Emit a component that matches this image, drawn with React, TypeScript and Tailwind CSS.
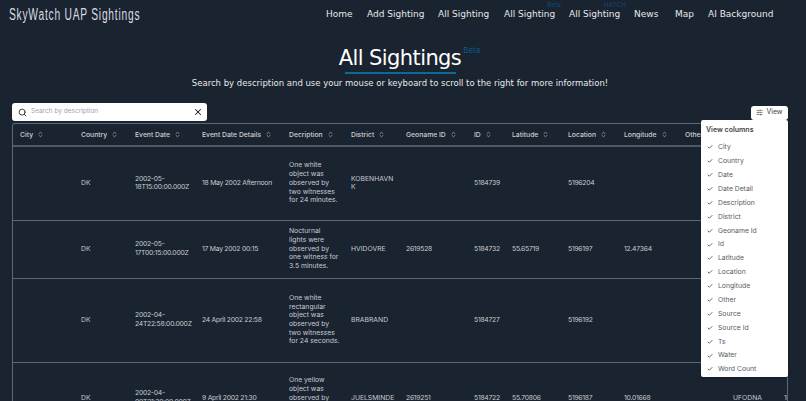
// <== IMPORTS ==>
import { Search, X, Check, ChevronsUpDown, SlidersHorizontal } from "lucide-react";

// <== NAV ITEMS ==>
const NAV_ITEMS = [
  { label: "Home", width: "w-[27px]" },
  { label: "Add Sighting", width: "w-[57px]" },
  { label: "All Sighting", width: "w-[52px]" },
  { label: "All Sighting", width: "w-[51px]", tag: "Beta" },
  { label: "All Sighting", width: "w-[51px]", tag: "HATCH" },
  { label: "News", width: "w-[27px]" },
  { label: "Map", width: "w-[19px]" },
  { label: "AI Background", width: "w-[67px]" },
];

// <== TABLE COLUMNS ==>
const COLUMNS = [
  { label: "City", width: "w-[60px]" },
  { label: "Country", width: "w-[54px]" },
  { label: "Event Date", width: "w-[67px]" },
  { label: "Event Date Details", width: "w-[87px]" },
  { label: "Decription", width: "w-[62px]" },
  { label: "District", width: "w-[55px]" },
  { label: "Geoname ID", width: "w-[68px]" },
  { label: "ID", width: "w-[38px]" },
  { label: "Latitude", width: "w-[56px]" },
  { label: "Location", width: "w-[56px]" },
  { label: "Longitude", width: "w-[61px]" },
  { label: "Other", width: "w-[48px]" },
  { label: "Source", width: "w-[51px]" },
  { label: "Source Id", width: "w-[60px]" },
];

// <== TABLE ROWS ==>
const ROWS = [
  {
    height: "h-[74px]",
    cells: ["", "DK", "2002-05-\n18T15:00:00.000Z", "18 May 2002 Afternoon", "One white\nobject was\nobserved by\ntwo witnesses\nfor 24 minutes.", "KOBENHAVN\nK", "", "5184739", "", "5196204", "", "", "", ""],
  },
  {
    height: "h-[58px]",
    cells: ["", "DK", "2002-05-\n17T00:15:00.000Z", "17 May 2002 00:15", "Nocturnal\nlights were\nobserved by\none witness for\n3.5 minutes.", "HVIDOVRE", "2619528", "5184732", "55.65719", "5196197", "12.47364", "", "", ""],
  },
  {
    height: "h-[84px]",
    cells: ["", "DK", "2002-04-\n24T22:58:00.000Z", "24 April 2002 22:58", "One white\nrectangular\nobject was\nobserved by\ntwo witnesses\nfor 24 seconds.", "BRABRAND", "", "5184727", "", "5196192", "", "", "", ""],
  },
  {
    height: "h-[72px]",
    cells: ["", "DK", "2002-04-\n09T21:30:00.000Z", "9 April 2002 21:30", "One yellow\nobject was\nobserved by\none witness\nfor 3 minutes.", "JUELSMINDE", "2619251", "5184722", "55.70806", "5196187", "10.01668", "", "UFODNA", "18"],
  },
];

// <== VISIBLE COLUMN OPTIONS ==>
const VIEW_OPTIONS = [
  "City",
  "Country",
  "Date",
  "Date Detail",
  "Description",
  "District",
  "Geoname Id",
  "Id",
  "Latitude",
  "Location",
  "Longitude",
  "Other",
  "Source",
  "Source Id",
  "Ts",
  "Water",
  "Word Count",
];

// <== HEADER ==>
const Header = () => (
  <div className="flex h-[28px] items-center justify-between pl-[9px] pr-[31px] pt-px">
    <span className="origin-left scale-x-[0.64] whitespace-nowrap font-['Liberation_Sans'] text-[16px] tracking-[1.2px] text-[#d8dce0]">
      SkyWatch UAP Sightings
    </span>
    <nav className="flex gap-[14px] font-['DejaVu_Sans'] text-[9px] text-[#e6e8eb]">
      {NAV_ITEMS.map((item, i) => (
        <span key={i} className={`relative whitespace-nowrap ${item.width}`}>
          {item.label}
          {item.tag && (
            <span className="absolute right-[-6px] top-[-7px] font-['Inter'] text-[6.5px] text-[#0e4a78]">
              {item.tag}
            </span>
          )}
        </span>
      ))}
    </nav>
  </div>
);

// <== TITLE BLOCK ==>
const TitleBlock = () => (
  <div className="flex flex-col items-center pr-[6px] pt-[16px]">
    <div className="relative">
      <h1 className="whitespace-nowrap font-['DejaVu_Sans'] text-[21px] leading-[28px] tracking-[-0.6px] text-white">
        All Sightings
      </h1>
      <span className="absolute left-[calc(100%+2px)] top-[0px] font-['Inter'] text-[8px] text-[#0e5a8a]">
        Beta
      </span>
      <div className="mx-auto h-[2px] w-[111px] bg-[#0c6a96]" />
    </div>
    <p className="mt-[2px] whitespace-nowrap font-['DejaVu_Sans'] text-[8.5px] leading-[14px] text-[#e6e8eb]">
      Search by description and use your mouse or keyboard to scroll to the right for more information!
    </p>
  </div>
);

// <== TOOLBAR ==>
const Toolbar = () => (
  <div className="mt-[13px] flex items-center justify-between pl-[12px] pr-[18px]">
    <div className="flex h-[18px] w-[195px] items-center rounded-[3px] bg-white pl-[6px] pr-[4px]">
      <Search className="size-[9px] text-[#333]" strokeWidth={2.5} />
      <span className="ml-[4px] flex-1 font-['Inter'] text-[6.5px] text-[#a0a4aa]">
        Search by description
      </span>
      <X className="size-[10px] text-[#222]" strokeWidth={2.5} />
    </div>
    <div className="mt-[1px] flex h-[14px] w-[37px] items-center justify-center gap-[3px] rounded-[3px] bg-white font-['Inter'] text-[7px] text-[#444]">
      <SlidersHorizontal className="size-[7px]" />
      View
    </div>
  </div>
);

// <== SIGHTINGS TABLE ==>
const SightingsTable = () => (
  <div className="ml-[12px] mr-[18px] mt-[2px] overflow-hidden rounded-t-[3px] border border-b-0 border-[#5b6875]">
    <table className="w-[823px] table-fixed border-collapse font-['Inter'] text-[6.8px] leading-[8.7px] text-[#c6cbd1]">
      <thead>
        <tr className="h-[22px] border-b-[2px] border-[#4d5967]">
          {COLUMNS.map((col) => (
            <th key={col.label} className={`${col.width} px-[8px] pt-px text-left font-medium text-[#ccd0d5] first:pl-[7px]`}>
              <span className="flex items-center gap-[4px] whitespace-nowrap">
                {col.label}
                <ChevronsUpDown className="size-[7px] shrink-0" />
              </span>
            </th>
          ))}
        </tr>
      </thead>
      <tbody>
        {ROWS.map((row, r) => (
          <tr key={r} className={`${row.height} border-b border-[#5b6875]`}>
            {row.cells.map((cell, c) => (
              <td key={c} className={`whitespace-pre px-[8px] align-middle ${/^\d/.test(cell) ? "tracking-[-0.25px]" : ""}`}>
                {cell}
              </td>
            ))}
          </tr>
        ))}
      </tbody>
    </table>
  </div>
);

// <== VIEW COLUMNS MENU ==>
const ViewMenu = () => (
  <div className="absolute left-[701px] top-[120px] w-[87px] rounded-[2px] bg-white px-[5px] pb-[1px] pt-[5px] font-['Inter'] text-[6.8px] text-[#555b63] shadow">
    <div className="mb-[6.5px] text-[7px] font-semibold leading-[9px] text-[#444]">View columns</div>
    {VIEW_OPTIONS.map((option) => (
      <div key={option} className="flex h-[13.875px] items-center gap-[5px] pl-[1px]">
        <Check className="size-[6px] text-[#333]" strokeWidth={3} />
        {option}
      </div>
    ))}
  </div>
);

// <== APP ==>
export default function App() {
  return (
    <div className="relative h-[401px] w-[806px] overflow-hidden bg-[#1a2330]">
      <Header />
      <TitleBlock />
      <Toolbar />
      <SightingsTable />
      <ViewMenu />
    </div>
  );
}
